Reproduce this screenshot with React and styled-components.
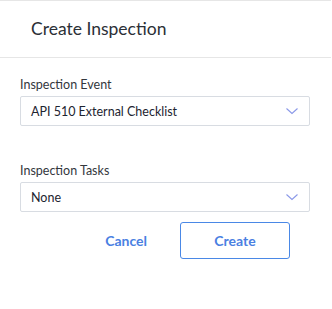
import React from "react";
import styled, { createGlobalStyle } from "styled-components";

const Global = createGlobalStyle`
  html, body { margin: 0; padding: 0; background: #fff; }
  body { font-family: Lato, "Noto Sans", sans-serif; }
`;

const Dialog = styled.div`
  width: 331px;
  height: 309px;
  background: #fff;
  box-sizing: border-box;
  display: flex;
  flex-direction: column;
`;

const Header = styled.div`
  height: 54px;
  border-top: 1px solid #e6e6e6;
  border-bottom: 1px solid #e6e6e6;
  display: flex;
  align-items: center;
  padding-left: 31px;
  padding-bottom: 2px;
  box-sizing: content-box;
`;

const Title = styled.h1`
  margin: 0;
  font-size: 17.5px;
  font-weight: 400;
  color: #2b2f36;
`;

const Body = styled.div`
  padding: 19px 21px 0 20px;
  display: flex;
  flex-direction: column;
`;

const Field = styled.div`
  display: flex;
  flex-direction: column;
  gap: 3px;
  margin-bottom: ${(p) => p.$mb || 0}px;
`;

const Label = styled.label`
  font-size: 12.5px;
  line-height: 16px;
  color: #33373d;
`;

const Select = styled.div`
  height: 28px;
  border: 1px solid #d8dce2;
  border-radius: 2px;
  display: flex;
  align-items: center;
  justify-content: space-between;
  padding: 0 11px 0 10px;
  font-size: 12.5px;
  color: #1d2430;
`;

const Actions = styled.div`
  display: flex;
  justify-content: flex-end;
  align-items: center;
  gap: 33px;
  padding-right: 20px;
  margin-top: 10px;
`;

const TextButton = styled.button`
  border: none;
  background: none;
  padding: 0;
  font-family: inherit;
  font-size: 14px;
  font-weight: 700;
  color: #4a80e2;
`;

const OutlineButton = styled.button`
  width: 110px;
  height: 37px;
  border: 1px solid #4a88e6;
  border-radius: 3px;
  background: #fff;
  font-family: inherit;
  font-size: 14px;
  font-weight: 700;
  color: #4a80e2;
`;

const Chevron = () => (
  <svg width="12" height="7" viewBox="0 0 12 7">
    <path d="M0.5 0.5 L6 5.5 L11.5 0.5" fill="none" stroke="#8a98e8" strokeWidth="1.1" />
  </svg>
);

export default function App() {
  return (
    <>
      <Global />
      <Dialog>
        <Header>
          <Title>Create Inspection</Title>
        </Header>
        <Body>
          <Field $mb={37}>
            <Label>Inspection Event</Label>
            <Select>
              <span>API 510 External Checklist</span>
              <Chevron />
            </Select>
          </Field>
          <Field>
            <Label>Inspection Tasks</Label>
            <Select>
              <span>None</span>
              <Chevron />
            </Select>
          </Field>
          <Actions>
            <TextButton>Cancel</TextButton>
            <OutlineButton>Create</OutlineButton>
          </Actions>
        </Body>
      </Dialog>
    </>
  );
}
